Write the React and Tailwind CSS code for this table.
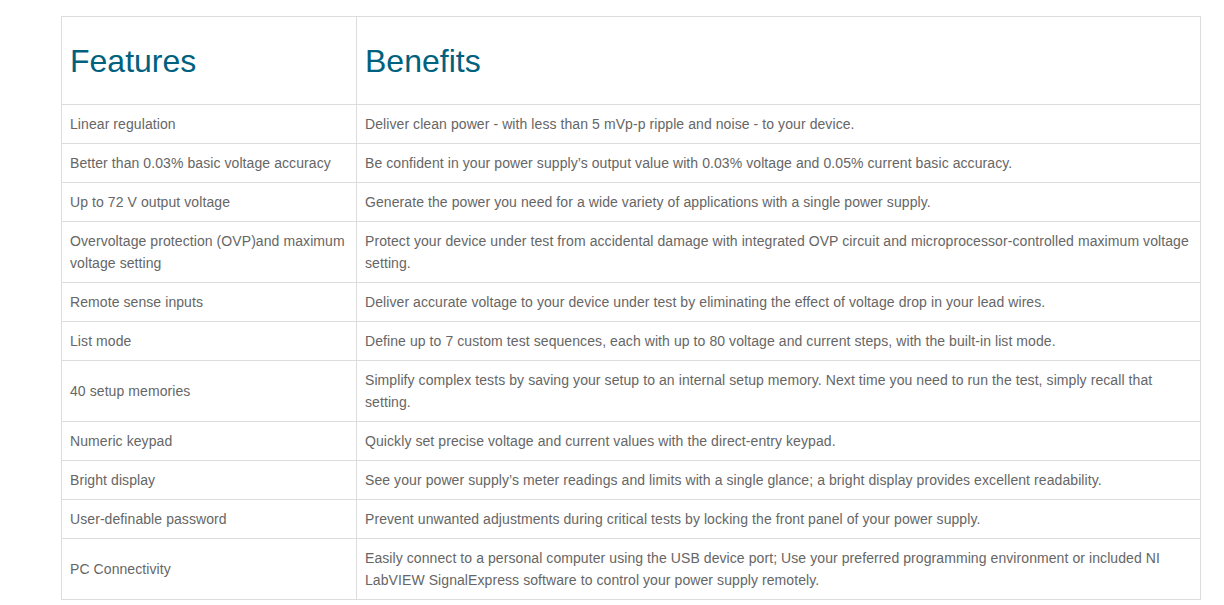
import React from 'react';

const rows = [
  ['Linear regulation', 'Deliver clean power - with less than 5 mVp-p ripple and noise - to your device.'],
  ['Better than 0.03% basic voltage accuracy', 'Be confident in your power supply’s output value with 0.03% voltage and 0.05% current basic accuracy.'],
  ['Up to 72 V output voltage', 'Generate the power you need for a wide variety of applications with a single power supply.'],
  ['Overvoltage protection (OVP)and maximum voltage setting', 'Protect your device under test from accidental damage with integrated OVP circuit and microprocessor-controlled maximum voltage setting.'],
  ['Remote sense inputs', 'Deliver accurate voltage to your device under test by eliminating the effect of voltage drop in your lead wires.'],
  ['List mode', 'Define up to 7 custom test sequences, each with up to 80 voltage and current steps, with the built-in list mode.'],
  ['40 setup memories', 'Simplify complex tests by saving your setup to an internal setup memory. Next time you need to run the test, simply recall that setting.'],
  ['Numeric keypad', 'Quickly set precise voltage and current values with the direct-entry keypad.'],
  ['Bright display', 'See your power supply’s meter readings and limits with a single glance; a bright display provides excellent readability.'],
  ['User-definable password', 'Prevent unwanted adjustments during critical tests by locking the front panel of your power supply.'],
  ['PC Connectivity', 'Easily connect to a personal computer using the USB device port; Use your preferred programming environment or included NI LabVIEW SignalExpress software to control your power supply remotely.'],
];

export default function App() {
  return (
    <div className="bg-white min-h-screen pt-4 pl-[61px]" style={{ fontFamily: '"Liberation Sans", Arial, sans-serif' }}>
      <table className="w-[1140px] border-collapse border border-[#ddd] text-[14px] leading-[22px] tracking-[0.08px] text-[#666]">
        <thead>
          <tr className="h-[88px]">
            <th className="w-[295px] border border-[#ddd] px-2 text-left align-middle font-normal text-[32px] leading-[36px] tracking-normal text-[#00617f]">
              Features
            </th>
            <th className="border border-[#ddd] px-2 text-left align-middle font-normal text-[32px] leading-[36px] tracking-normal text-[#00617f]">
              Benefits
            </th>
          </tr>
        </thead>
        <tbody>
          {rows.map(([feature, benefit]) => (
            <tr key={feature}>
              <td className="w-[295px] border border-[#ddd] px-2 py-2 align-middle">{feature}</td>
              <td className="border border-[#ddd] px-2 py-2 align-middle">{benefit}</td>
            </tr>
          ))}
        </tbody>
      </table>
    </div>
  );
}
